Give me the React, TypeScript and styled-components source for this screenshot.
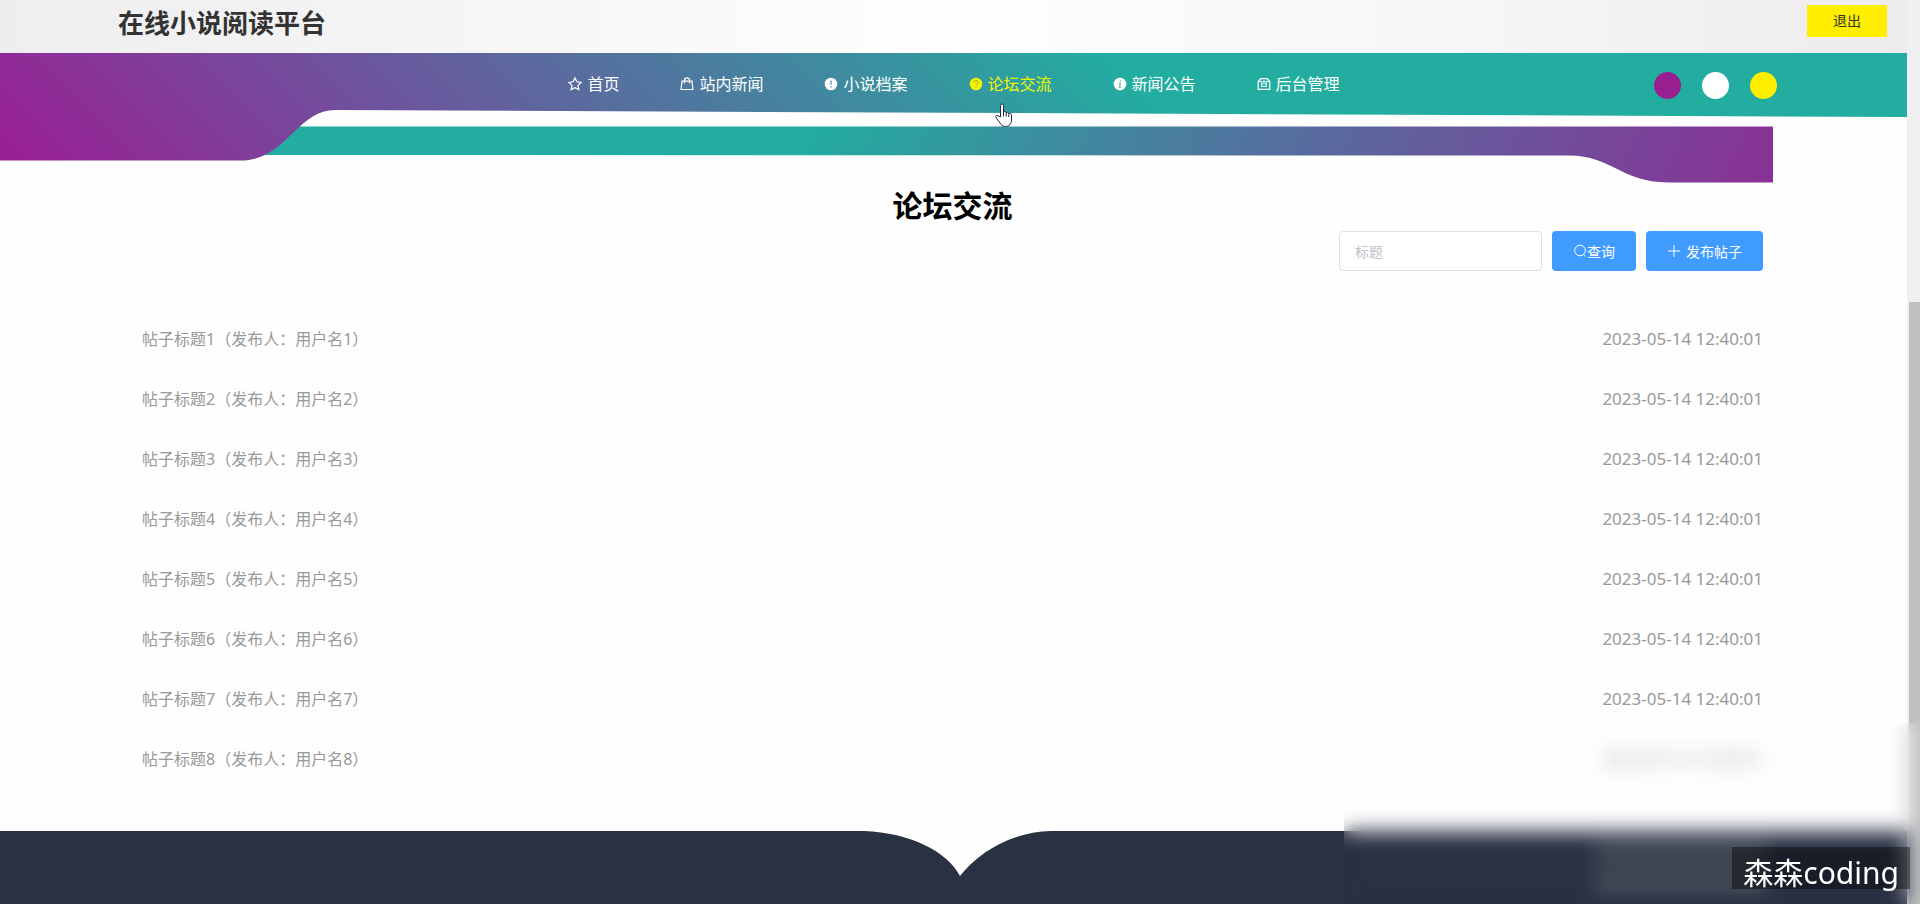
import React from "react";
import styled, { createGlobalStyle } from "styled-components";

const Global = createGlobalStyle`
  * { box-sizing: border-box; }
  html, body, #root { height: 100%; }
  body {
    margin: 0;
    background: #fefefe;
    font-family: "Noto Sans", "Noto Sans CJK SC", sans-serif;
    font-size: 16px;
    overflow: hidden;
  }
  a { color: inherit; text-decoration: none; }
  button, input { font: inherit; }
`;

const Shell = styled.div`
  display: flex;
  min-height: 100vh;
  position: relative;
`;
const Page = styled.div`
  flex: 1;
  min-width: 0;
  display: flex;
  flex-direction: column;
`;
const ScrollTrack = styled.div`
  width: 13px;
  display: flex;
  flex-direction: column;
  justify-content: flex-end;
  padding-left: 2px;
  background: #f1eff2;
`;
const ScrollThumb = styled.div`
  height: calc(100% - 302px);
  background: #c1c1c3;
`;

const TopBar = styled.header`
  height: 53px;
  padding: 5px 20px 16px 118px;
  display: flex;
  align-items: flex-start;
  justify-content: space-between;
  background: linear-gradient(90deg, #eeedef 0%, #fefefe 50%, #f7f6f8 75%, #edebee 100%);
`;
const Brand = styled.h1`
  margin: 0;
  font-size: 26px;
  line-height: 36px;
  font-weight: 700;
  color: #333;
`;
const Logout = styled.button`
  width: 80px;
  height: 32px;
  padding: 0 0 2px;
  border: 0;
  background: #ffee00;
  color: #333;
  font-size: 14px;
`;

const Hero = styled.div`
  position: relative;
  height: 130px;
`;
const Ribbon = styled.svg`
  position: absolute;
  inset: 0;
  width: 100%;
  height: 130px;
`;
const NavBar = styled.div`
  position: relative;
  height: 64px;
  padding: 0 130px;
  display: grid;
  grid-template-columns: 1fr auto 1fr;
  align-items: center;
`;
const Nav = styled.nav`
  grid-column: 2;
  display: flex;
  gap: 60px;
  padding-bottom: 2px;
`;
const NavLink = styled.a<{ $active?: boolean }>`
  display: flex;
  align-items: center;
  gap: 4px;
  font-size: 16px;
  line-height: 24px;
  color: ${(p) => (p.$active ? "#f2f800" : "#fff")};
`;
const NavIcon = styled.svg`
  width: 16px;
  height: 16px;
  fill: none;
  stroke: currentColor;
  stroke-width: 1.2;
`;
const Swatches = styled.div`
  justify-self: end;
  display: flex;
  gap: 21px;
`;
const Swatch = styled.button<{ $color: string }>`
  width: 27px;
  height: 27px;
  padding: 0;
  border: 0;
  border-radius: 50%;
  background: ${(p) => p.$color};
`;

const Main = styled.main`
  margin: 0 134px 0 132px;
  padding: 0 10px;
  flex: 1;
`;
const Heading = styled.h2`
  margin: 0 0 2px;
  font-size: 30px;
  line-height: 46px;
  font-weight: 700;
  text-align: center;
  color: #000;
`;
const SearchForm = styled.form`
  display: flex;
  justify-content: flex-end;
  gap: 10px;
  font-size: 14px;
`;
const SearchInput = styled.input`
  width: 203px;
  height: 40px;
  padding: 0 15px;
  border: 1px solid #dcdfe6;
  border-radius: 4px;
  background: #fff;
  color: #606266;
  outline: 0;
  &::placeholder { color: #bfc2c8; }
`;
const Action = styled.button<{ $gap?: number }>`
  height: 40px;
  padding: 0 21px;
  display: flex;
  align-items: center;
  gap: ${(p) => p.$gap ?? 0}px;
  border: 0;
  border-radius: 4px;
  background: #409bff;
  color: #fff;
  white-space: nowrap;
`;
const Posts = styled.ul`
  list-style: none;
  margin: 38px 0 0;
  padding: 0;
`;
const Post = styled.li`
  display: flex;
  justify-content: space-between;
  align-items: center;
  min-height: 60px;
  color: #999;
  line-height: 24px;
`;
const PostTime = styled.time`
  font-size: 17px;
`;

const Footer = styled.footer`
  position: relative;
  height: 73px;
  padding: 10px 140px 8px 0;
  background: #2a3143;
  display: flex;
  flex-direction: column;
  align-items: flex-end;
  gap: 8px;
`;
const FooterSmudge = styled.div`
  width: 172px;
  height: 22px;
  background: #464c59;
`;
const Notch = styled.svg`
  position: absolute;
  left: calc(50% - 90px);
  top: 0;
  width: 187px;
  height: 46px;
`;
const Haze = styled.div`
  position: absolute;
  right: 0;
  bottom: 0;
  width: 30%;
  height: 181px;
  backdrop-filter: blur(10px);
`;
const Watermark = styled.div`
  position: absolute;
  right: 10px;
  bottom: 15px;
  height: 42px;
  padding: 0 11px;
  background: rgba(0, 0, 0, 0.4);
  color: #fff;
  font-size: 30px;
  line-height: 52px;
`;
const Cursor = styled.svg`
  position: absolute;
  left: 994px;
  top: 103px;
  width: 20px;
  height: 25px;
`;

const icons: Record<string, React.ReactNode> = {
  star: <path d="M8 1.9l1.9 3.9 4.2.6-3.1 3 .8 4.2L8 11.6l-3.800 2 .8-4.2-3.100-3 4.200-.6z" />,
  bag: (
    <>
      <path d="M3 5.200h10l.9 8.300H2.100z" />
      <path d="M5.500 7.500V4.300a2.500 2.500 0 0 1 5 0V7.500" />
    </>
  ),
  warning: (
    <>
      <circle cx="8" cy="8" r="6.300" fill="#fff" stroke="none" />
      <path d="M8 4.500v4.200M8 10v1.500" stroke="#4c8a9c" />
    </>
  ),
  question: (
    <>
      <circle cx="8" cy="8" r="6.300" fill="currentColor" stroke="none" />
      <path d="M6 6.500a2 2 0 1 1 2.700 1.900c-.5.2-.7.5-.7 1M8 10.700v1.200" stroke="#a9a520" strokeWidth="1" />
    </>
  ),
  info: (
    <>
      <circle cx="8" cy="8" r="6.300" fill="#fff" stroke="none" />
      <path d="M8.500 4.300v1.300M7 7.200h1.300L7.600 11.300h1.300" stroke="#67b9b3" />
    </>
  ),
  admin: (
    <>
      <path d="M2.200 13.300V5.500L4.700 2.700h6.600l2.500 2.800v7.800zM2.200 5.500h3.600M10.200 5.500h3.600" />
      <path d="M5.800 5.500v5h4.400v-5M8 4v4.500" />
    </>
  ),
};

const links = [
  { icon: "star", label: "首页" },
  { icon: "bag", label: "站内新闻" },
  { icon: "warning", label: "小说档案" },
  { icon: "question", label: "论坛交流", active: true },
  { icon: "info", label: "新闻公告" },
  { icon: "admin", label: "后台管理" },
];

const posts = [1, 2, 3, 4, 5, 6, 7, 8].map((n) => ({
  title: `帖子标题${n}（发布人：用户名${n}）`,
  time: "2023-05-14 12:40:01",
}));

export default function App() {
  return (
    <Shell>
      <Global />
      <Page>
        <TopBar>
          <Brand>在线小说阅读平台</Brand>
          <Logout type="button">退出</Logout>
        </TopBar>
        <Hero>
          <Ribbon viewBox="0 0 1907 130" preserveAspectRatio="none" aria-hidden="true">
            <defs>
              <linearGradient id="band" gradientUnits="userSpaceOnUse" x1="40" y1="130" x2="640" y2="-470">
                <stop offset="0" stopColor="#992094" />
                <stop offset="0.364" stopColor="#6c559e" />
                <stop offset="1" stopColor="#22ada0" />
              </linearGradient>
              <linearGradient id="tail" gradientUnits="userSpaceOnUse" x1="840" y1="0" x2="1700" y2="400">
                <stop offset="0" stopColor="#22ada0" />
                <stop offset="0.530" stopColor="#5c669e" />
                <stop offset="1" stopColor="#8f2a95" />
              </linearGradient>
            </defs>
            <path fill="url(#tail)" d="M260 73.500H1773V129.500H1668C1620 129 1612 102.500 1569 102.500L260 102Z" />
            <path fill="url(#band)" d="M0 0H1907V64L335 57C297 57 286 107.500 241 107.500H0Z" />
          </Ribbon>
          <NavBar>
            <Nav>
              {links.map((l) => (
                <NavLink key={l.label} href="#" $active={l.active}>
                  <NavIcon viewBox="0 0 16 16" aria-hidden="true">{icons[l.icon]}</NavIcon>
                  {l.label}
                </NavLink>
              ))}
            </Nav>
            <Swatches>
              <Swatch type="button" aria-label="紫色" $color="#991f91" />
              <Swatch type="button" aria-label="白色" $color="#fff" />
              <Swatch type="button" aria-label="黄色" $color="#ffee00" />
            </Swatches>
          </NavBar>
        </Hero>
        <Main>
          <Heading>论坛交流</Heading>
          <SearchForm onSubmit={(e) => e.preventDefault()}>
            <SearchInput aria-label="标题" placeholder="标题" />
            <Action type="submit">
              <svg width="14" height="14" viewBox="0 0 14 14" fill="none" stroke="currentColor" aria-hidden="true">
                <circle cx="7" cy="6.500" r="5.300" />
                <path d="M10.300 10.300l2 2.200" />
              </svg>
              查询
            </Action>
            <Action type="button" $gap={5}>
              <svg width="14" height="14" viewBox="0 0 14 14" fill="none" stroke="currentColor" aria-hidden="true">
                <path d="M7 1v12M1 7h12" />
              </svg>
              发布帖子
            </Action>
          </SearchForm>
          <Posts>
            {posts.map((p) => (
              <Post key={p.title}>
                <a href="#">{p.title}</a>
                <PostTime>{p.time}</PostTime>
              </Post>
            ))}
          </Posts>
        </Main>
        <Footer>
          <Notch viewBox="0 0 187 46" aria-hidden="true">
            <path fill="#fefefe" d="M0 0C46 2 83 20 96 45C114 22 146 1 187 0Z" />
          </Notch>
          <FooterSmudge />
          <FooterSmudge />
        </Footer>
      </Page>
      <ScrollTrack>
        <ScrollThumb />
      </ScrollTrack>
      <Haze />
      <Watermark>森森coding</Watermark>
      <Cursor viewBox="0 0 20 25" aria-hidden="true">
        <path
          d="M6.500 14V2.500a1.500 1.500 0 0 1 3 0V9c.8-.9 2.400-.6 2.700.6 1-.7 2.300-.3 2.600.9 1.200-.5 2.700.1 2.700 1.700V17c0 4-2.500 6.500-6 6.500-3 0-4.500-1.500-5.500-3.500L2 14.500c-.8-1.500.8-2.700 2-1.700z"
          fill="#fff"
          stroke="#222a4a"
        />
        <path d="M9.500 9v4.500M12.200 9.600v4M14.800 10.500v3.500" stroke="#222a4a" />
      </Cursor>
    </Shell>
  );
}
